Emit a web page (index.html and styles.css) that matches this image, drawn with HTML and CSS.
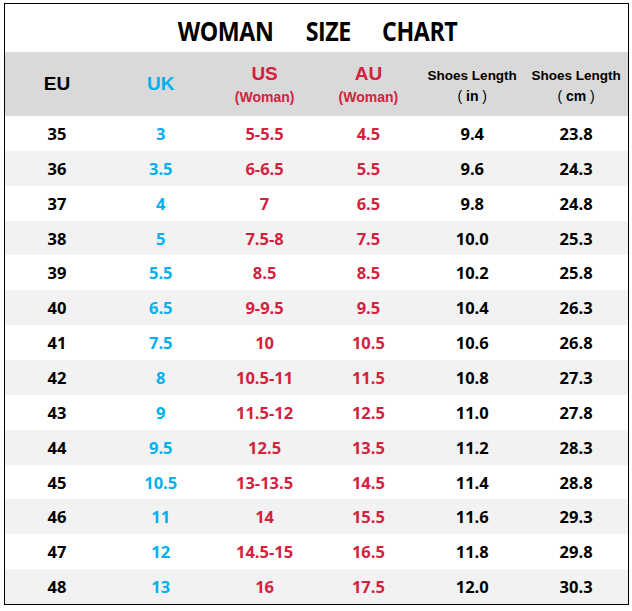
FILE: index.html
```html
<!DOCTYPE html>
<html>
<head>
<meta charset="utf-8">
<link rel="stylesheet" href="styles.css">
</head>
<body>
<div class="chart">
  <div class="title"><span>WOMAN</span><span>SIZE</span><span>CHART</span></div>
  <div class="row head">
    <div class="c big">EU</div>
    <div class="c big uk">UK</div>
    <div class="c red"><div class="big">US</div><div class="sub">(Woman)</div></div>
    <div class="c red"><div class="big">AU</div><div class="sub">(Woman)</div></div>
    <div class="c sm"><div>Shoes Length</div><div class="unit"><span class="p">(</span> in <span class="p">)</span></div></div>
    <div class="c sm"><div>Shoes Length</div><div class="unit"><span class="p">(</span> cm <span class="p">)</span></div></div>
  </div>
  <div class="body">
    <div class="row"><div class="c">35</div><div class="c uk">3</div><div class="c red">5-5.5</div><div class="c red">4.5</div><div class="c">9.4</div><div class="c">23.8</div></div>
    <div class="row alt"><div class="c">36</div><div class="c uk">3.5</div><div class="c red">6-6.5</div><div class="c red">5.5</div><div class="c">9.6</div><div class="c">24.3</div></div>
    <div class="row"><div class="c">37</div><div class="c uk">4</div><div class="c red">7</div><div class="c red">6.5</div><div class="c">9.8</div><div class="c">24.8</div></div>
    <div class="row alt"><div class="c">38</div><div class="c uk">5</div><div class="c red">7.5-8</div><div class="c red">7.5</div><div class="c">10.0</div><div class="c">25.3</div></div>
    <div class="row"><div class="c">39</div><div class="c uk">5.5</div><div class="c red">8.5</div><div class="c red">8.5</div><div class="c">10.2</div><div class="c">25.8</div></div>
    <div class="row alt"><div class="c">40</div><div class="c uk">6.5</div><div class="c red">9-9.5</div><div class="c red">9.5</div><div class="c">10.4</div><div class="c">26.3</div></div>
    <div class="row"><div class="c">41</div><div class="c uk">7.5</div><div class="c red">10</div><div class="c red">10.5</div><div class="c">10.6</div><div class="c">26.8</div></div>
    <div class="row alt"><div class="c">42</div><div class="c uk">8</div><div class="c red">10.5-11</div><div class="c red">11.5</div><div class="c">10.8</div><div class="c">27.3</div></div>
    <div class="row"><div class="c">43</div><div class="c uk">9</div><div class="c red">11.5-12</div><div class="c red">12.5</div><div class="c">11.0</div><div class="c">27.8</div></div>
    <div class="row alt"><div class="c">44</div><div class="c uk">9.5</div><div class="c red">12.5</div><div class="c red">13.5</div><div class="c">11.2</div><div class="c">28.3</div></div>
    <div class="row"><div class="c">45</div><div class="c uk">10.5</div><div class="c red">13-13.5</div><div class="c red">14.5</div><div class="c">11.4</div><div class="c">28.8</div></div>
    <div class="row alt"><div class="c">46</div><div class="c uk">11</div><div class="c red">14</div><div class="c red">15.5</div><div class="c">11.6</div><div class="c">29.3</div></div>
    <div class="row"><div class="c">47</div><div class="c uk">12</div><div class="c red">14.5-15</div><div class="c red">16.5</div><div class="c">11.8</div><div class="c">29.8</div></div>
    <div class="row alt"><div class="c">48</div><div class="c uk">13</div><div class="c red">16</div><div class="c red">17.5</div><div class="c">12.0</div><div class="c">30.3</div></div>
  </div>
</div>
</body>
</html>
```
FILE: styles.css
```css
html, body { margin: 0; padding: 0; background: #fff; }
body { padding: 3px 0 0 4px; }
.chart {
  width: 623px;
  height: 600px;
  border: 1px solid #000;
  display: flex;
  flex-direction: column;
  background: #fff;
}
.title {
  height: 48px;
  display: flex;
  justify-content: center;
  align-items: center;
  gap: 21px;
  font-family: "Open Sans", sans-serif;
  font-weight: 700;
  font-size: 27px;
  letter-spacing: -0.5px;
  color: #000;
  padding-top: 4px;
  box-sizing: border-box;
}
.title span { display: inline-block; transform: scaleX(0.86); }
.row {
  display: grid;
  grid-template-columns: repeat(6, 1fr);
  flex: 1;
}
.head {
  flex: 0 0 64px;
  background: #d9d9d9;
  font-family: "Liberation Sans", Arial, sans-serif;
  font-weight: 700;
}
.body { flex: 1; display: flex; flex-direction: column; }
.alt { background: #f2f2f2; }
.c {
  display: flex;
  flex-direction: column;
  justify-content: center;
  align-items: center;
  font-family: "Open Sans", sans-serif;
  font-weight: 700;
  font-size: 16.5px;
  color: #000;
}
.head .c { font-family: "Liberation Sans", Arial, sans-serif; }
.big { font-size: 19px; font-weight: 700; }
.head .big { line-height: 22px; }
.sub { font-size: 14px; margin-top: 4px; }
.sm { font-size: 13.5px; padding-top: 4px; }
.unit { margin-top: 5px; font-size: 14px; white-space: pre; }
.unit .p { font-weight: 400; }
.uk { color: #00b0f0; }
.red { color: #d4213d; }
```
